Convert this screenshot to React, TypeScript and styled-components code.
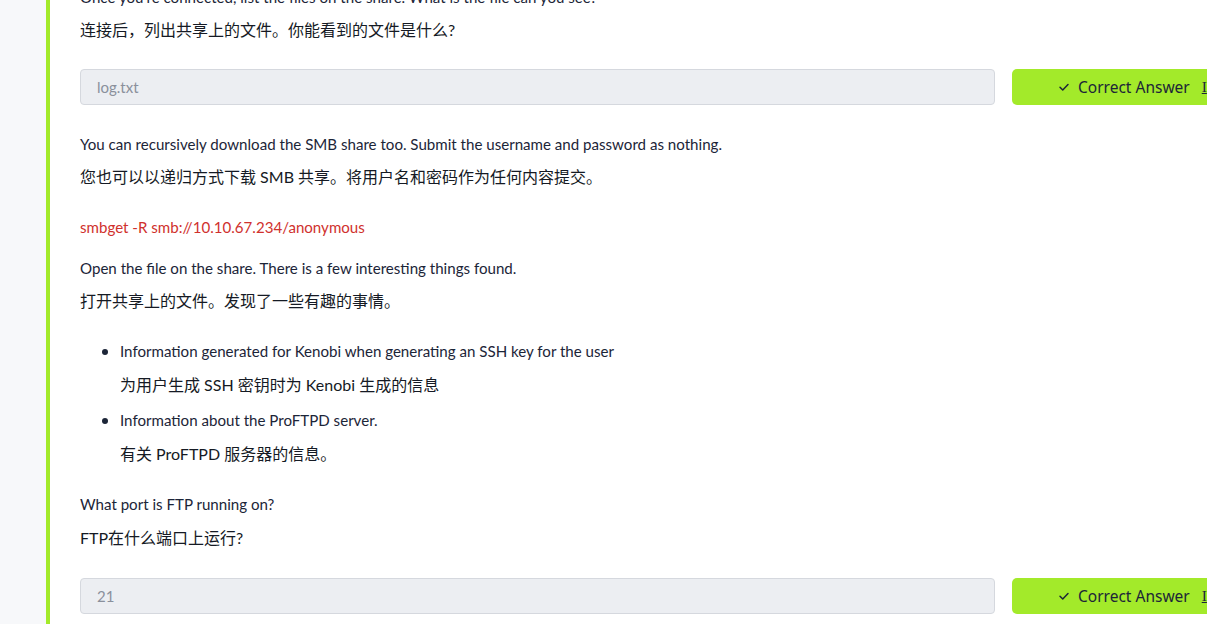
import React from "react";
import styled, { createGlobalStyle } from "styled-components";

const GlobalStyle = createGlobalStyle`
  html, body {
    margin: 0;
    padding: 0;
    overflow: hidden;
    background: #ffffff;
  }
  body {
    font-family: Lato, "Noto Sans CJK SC", sans-serif;
    color: #1c2538;
  }
`;

const Page = styled.div`
  display: flex;
  width: 1207px;
  height: 624px;
  overflow: hidden;
`;

const SideStrip = styled.div`
  width: 46px;
  flex-shrink: 0;
  background: #f7f8fa;
`;

const TaskBody = styled.div`
  flex: 1;
  border-left: 4px solid #a3ea2a;
  padding-left: 30px;
  margin-top: -14px;
`;

const EnText = styled.p`
  margin: 0;
  font-size: 15.1px;
  line-height: 22px;
  color: #1c2538;
`;

const ZhText = styled.p<{ gapTop?: number; gapAfter?: number }>`
  margin: ${(p) => p.gapTop ?? 11}px 0 ${(p) => p.gapAfter ?? 0}px;
  font-size: 16px;
  line-height: 22px;
  color: #151a24;
`;

const Code = styled.p`
  margin: 0 0 19px;
  font-size: 15.1px;
  line-height: 22px;
  color: #d0312d;
`;

const AnswerRow = styled.div<{ top: number; bottom: number }>`
  display: flex;
  gap: 17px;
  margin: ${(p) => p.top}px 0 ${(p) => p.bottom}px;
`;

const AnswerBox = styled.div`
  width: 915px;
  height: 36px;
  box-sizing: border-box;
  flex-shrink: 0;
  background: #eceef2;
  border: 1px solid #d5d8de;
  border-radius: 4px;
  padding: 0 16px;
  display: flex;
  align-items: center;
  font-size: 15px;
  color: #8a909c;
`;

const CorrectButton = styled.div`
  width: 220px;
  height: 36px;
  flex-shrink: 0;
  background: #a3ea2a;
  border-radius: 5px;
  display: flex;
  align-items: center;
  padding-left: 46px;
  box-sizing: border-box;
  gap: 8px;
  font-family: "Noto Sans", "DejaVu Sans", sans-serif;
  font-size: 15.5px;
  color: #1c2538;
  white-space: nowrap;
`;

const HintMark = styled.span`
  margin-left: 4px;
  text-decoration: underline;
  font-family: "Liberation Serif", serif;
`;

const BulletList = styled.ul`
  margin: 1px 0 28px;
  padding-left: 40px;
`;

const BulletItem = styled.li`
  font-size: 15.1px;
  line-height: 22px;
  &::marker {
    font-size: 17px;
  }
`;

const Check = () => (
  <svg width="12" height="12" viewBox="0 0 24 24" fill="none" stroke="#1c2538" strokeWidth="3" strokeLinecap="round" strokeLinejoin="round">
    <path d="M4 12.5l5.5 5.5L20 7" />
  </svg>
);

const Answer: React.FC<{ value: string; top: number; bottom: number }> = ({ value, top, bottom }) => (
  <AnswerRow top={top} bottom={bottom}>
    <AnswerBox>{value}</AnswerBox>
    <CorrectButton>
      <Check />
      <span>Correct Answer</span>
      <HintMark>I</HintMark>
    </CorrectButton>
  </AnswerRow>
);

export default function App() {
  return (
    <Page>
      <GlobalStyle />
      <SideStrip />
      <TaskBody>
        <EnText>Once you're connected, list the files on the share. What is the file can you see?</EnText>
        <ZhText>连接后，列出共享上的文件。你能看到的文件是什么?</ZhText>
        <Answer value="log.txt" top={28} bottom={28} />
        <EnText>You can recursively download the SMB share too. Submit the username and password as nothing.</EnText>
        <ZhText gapAfter={28}>您也可以以递归方式下载 SMB 共享。将用户名和密码作为任何内容提交。</ZhText>
        <Code>smbget -R smb://10.10.67.234/anonymous</Code>
        <EnText>Open the file on the share. There is a few interesting things found.</EnText>
        <ZhText gapAfter={28}>打开共享上的文件。发现了一些有趣的事情。</ZhText>
        <BulletList>
          <BulletItem>
            Information generated for Kenobi when generating an SSH key for the user
            <ZhText gapTop={12} gapAfter={13}>为用户生成 SSH 密钥时为 Kenobi 生成的信息</ZhText>
          </BulletItem>
          <BulletItem>
            Information about the ProFTPD server.
            <ZhText gapTop={12}>有关 ProFTPD 服务器的信息。</ZhText>
          </BulletItem>
        </BulletList>
        <EnText>What port is FTP running on?</EnText>
        <ZhText gapTop={12}>FTP在什么端口上运行?</ZhText>
        <Answer value="21" top={29} bottom={20} />
      </TaskBody>
    </Page>
  );
}
